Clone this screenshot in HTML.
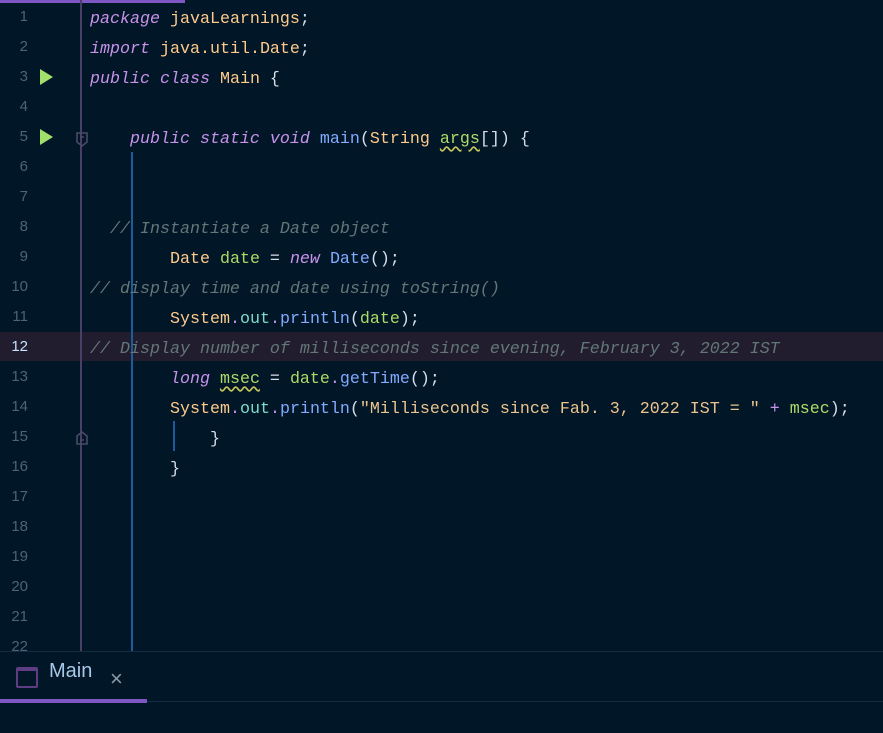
<!DOCTYPE html>
<html><head><style>
body{margin:0;width:883px;height:732px;background:#011627;overflow:hidden;position:relative;font-family:"Liberation Mono",monospace;}
.top{position:absolute;left:0;top:0;width:185px;height:3px;background:#7e57c2;}
.ln{position:absolute;left:0;width:28px;text-align:right;color:#4b6479;font-size:15px;font-family:"Liberation Sans",sans-serif;}
.code{position:absolute;left:90px;white-space:pre;font-size:16.67px;color:#d6deeb;}
.k{color:#c792ea;font-style:italic}.t{color:#ffcb8b}.v{color:#addb67}.c{color:#637777;font-style:italic}
.o{color:#7fdbca}.f{color:#82aaff}.s{color:#ecc48d}.p{color:#c792ea}
.w{text-decoration:underline wavy #c5c55a;text-underline-offset:3px}
.play{position:absolute;left:40px;width:0;height:0;border-left:13px solid #a2e06b;border-top:8px solid transparent;border-bottom:8px solid transparent;}
</style></head><body>
<div class="top"></div>
<div style="position:absolute;left:0;top:332px;width:883px;height:29px;background:#211d2e"></div>
<div style="position:absolute;left:80px;top:0;width:2px;height:652px;background:#4a3f66"></div>
<div style="position:absolute;left:131px;top:152px;width:2px;height:500px;background:#1d5c99"></div>
<div style="position:absolute;left:173px;top:421px;width:2px;height:30px;background:#1d5c99"></div>
<div class="play" style="top:69px"></div><div class="play" style="top:129px"></div>
<svg style="position:absolute;left:75px;top:132px" width="14" height="16"><path d="M2 1h10v9l-5 4l-5-4z" fill="none" stroke="#4a4a6a" stroke-width="1.6"/><path d="M5 5h4" stroke="#4a4a6a" stroke-width="1.5"/></svg>
<svg style="position:absolute;left:75px;top:430px" width="14" height="16"><path d="M2 14h10v-8l-5-4l-5 4z" fill="none" stroke="#4a4a6a" stroke-width="1.6"/><path d="M5 10h4" stroke="#4a4a6a" stroke-width="1.5"/></svg>
<div class="code" style="top:5px;line-height:30px"><span class="k">package</span> <span class="t">javaLearnings</span>;
<span class="k">import</span> <span class="t">java.util.Date</span>;
<span class="k">public class</span> <span class="t">Main</span> {

    <span class="k">public static void</span> <span class="f">main</span>(<span class="t">String</span> <span class="v w">args</span>[]) {


  <span class="c">// Instantiate a Date object</span>
        <span class="t">Date</span> <span class="v">date</span> = <span class="k">new</span> <span class="f">Date</span>();
<span class="c">// display time and date using toString()</span>
        <span class="t">System</span><span class="p">.</span><span class="o">out</span><span class="p">.</span><span class="f">println</span>(<span class="v">date</span>);
<span class="c">// Display number of milliseconds since evening, February 3, 2022 IST</span>
        <span class="k">long</span> <span class="v w">msec</span> = <span class="v">date</span><span class="p">.</span><span class="f">getTime</span>();
        <span class="t">System</span><span class="p">.</span><span class="o">out</span><span class="p">.</span><span class="f">println</span>(<span class="s">"Milliseconds since Fab. 3, 2022 IST = "</span> <span class="p">+</span> <span class="v">msec</span>);
            }
        }</div>
<div style="position:absolute;left:0;top:0">
<div class="ln" style="top:8px">1</div><div class="ln" style="top:38px">2</div><div class="ln" style="top:68px">3</div><div class="ln" style="top:98px">4</div><div class="ln" style="top:128px">5</div><div class="ln" style="top:158px">6</div><div class="ln" style="top:188px">7</div><div class="ln" style="top:218px">8</div><div class="ln" style="top:248px">9</div><div class="ln" style="top:278px">10</div><div class="ln" style="top:308px">11</div><div class="ln" style="top:338px;color:#c5e4fd">12</div><div class="ln" style="top:368px">13</div><div class="ln" style="top:398px">14</div><div class="ln" style="top:428px">15</div><div class="ln" style="top:458px">16</div><div class="ln" style="top:488px">17</div><div class="ln" style="top:518px">18</div><div class="ln" style="top:548px">19</div><div class="ln" style="top:578px">20</div><div class="ln" style="top:608px">21</div><div class="ln" style="top:638px">22</div>
</div>
<div style="position:absolute;left:0;top:651px;width:883px;height:81px;background:#011627;border-top:1px solid #122d42"></div>
<div style="position:absolute;left:16px;top:667px;border:2px solid #5f3d82;border-top-width:4px;border-radius:2px;box-sizing:border-box;width:22px;height:21px"></div>
<div style="position:absolute;left:49px;top:660px;font-family:'Liberation Sans',sans-serif;font-size:20px;color:#a9c8e6">Main</div>
<div style="position:absolute;left:110px;top:666px;font-family:'Liberation Sans',sans-serif;font-size:22px;color:#8a9aa8">×</div>
<div style="position:absolute;left:0;top:699px;width:147px;height:4px;background:#7e57c2"></div>
<div style="position:absolute;left:147px;top:701px;width:736px;height:1px;background:#122d42"></div>
</body></html>
